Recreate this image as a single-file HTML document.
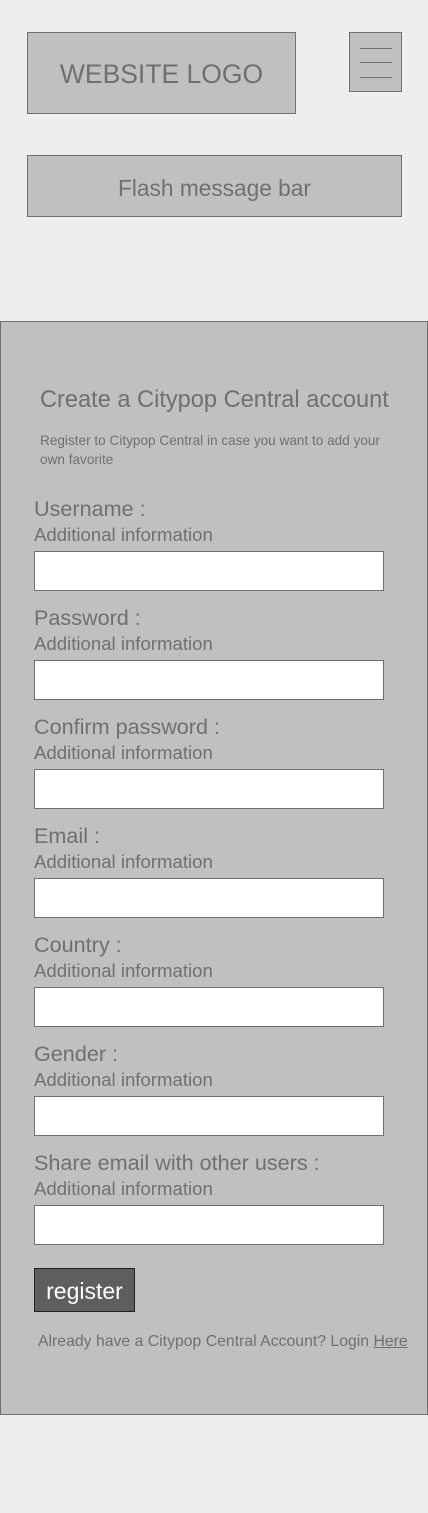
<!DOCTYPE html>
<html><head><style>
body{margin:0;width:428px;height:1513px;background:#eeeeee;position:relative;font-family:"Liberation Sans",sans-serif;color:#707070;overflow:hidden}
div{position:absolute;box-sizing:border-box}
.box{background:#c0c0c0;border:1px solid #707070}
.t{white-space:nowrap}
.lbl{left:34px;font-size:21.6px;line-height:24px}
.add{left:34px;font-size:18.6px;line-height:20px}
.in{left:34px;width:350px;height:40px;background:#fff;border:1px solid #707070}
.hl{left:10px;width:32px;height:1px;background:#707070}
</style></head><body>
<div class="box" style="left:27px;top:32px;width:269px;height:82px"></div>
<div class="t" style="left:27px;top:57px;width:269px;text-align:center;font-size:26.5px;line-height:34px">WEBSITE LOGO</div>
<div class="box" style="left:349px;top:32px;width:53px;height:60px">
<div class="hl" style="top:15px"></div><div class="hl" style="top:29px"></div><div class="hl" style="top:44px"></div></div>
<div class="box" style="left:27px;top:155px;width:375px;height:62px"></div>
<div class="t" style="left:27px;top:174px;width:375px;text-align:center;font-size:22.7px;line-height:28px">Flash message bar</div>
<div class="box" style="left:0;top:321px;width:428px;height:1094px"></div>
<div class="t" style="left:40px;top:386px;font-size:23.6px;line-height:28px">Create a Citypop Central account</div>
<div style="left:40px;top:431px;width:355px;font-size:13.6px;line-height:19px">Register to Citypop Central in case you want to add your own favorite</div>

<div class="t lbl" style="top:497px">Username :</div><div class="t add" style="top:525px">Additional information</div><div class="in" style="top:551px"></div>
<div class="t lbl" style="top:606px">Password :</div><div class="t add" style="top:634px">Additional information</div><div class="in" style="top:660px"></div>
<div class="t lbl" style="top:715px">Confirm password :</div><div class="t add" style="top:743px">Additional information</div><div class="in" style="top:769px"></div>
<div class="t lbl" style="top:824px">Email :</div><div class="t add" style="top:852px">Additional information</div><div class="in" style="top:878px"></div>
<div class="t lbl" style="top:933px">Country :</div><div class="t add" style="top:961px">Additional information</div><div class="in" style="top:987px"></div>
<div class="t lbl" style="top:1042px">Gender :</div><div class="t add" style="top:1070px">Additional information</div><div class="in" style="top:1096px"></div>
<div class="t lbl" style="top:1151px">Share email with other users :</div><div class="t add" style="top:1179px">Additional information</div><div class="in" style="top:1205px"></div>

<div style="left:34px;top:1268px;width:101px;height:44px;background:#5e5e5e;border:1px solid #222;color:#fff;font-size:23px;line-height:44px;text-align:center">register</div>
<div class="t" style="left:38px;top:1332px;font-size:15.8px;line-height:20px">Already have a Citypop Central Account? Login <u>Here</u></div>
</body></html>
